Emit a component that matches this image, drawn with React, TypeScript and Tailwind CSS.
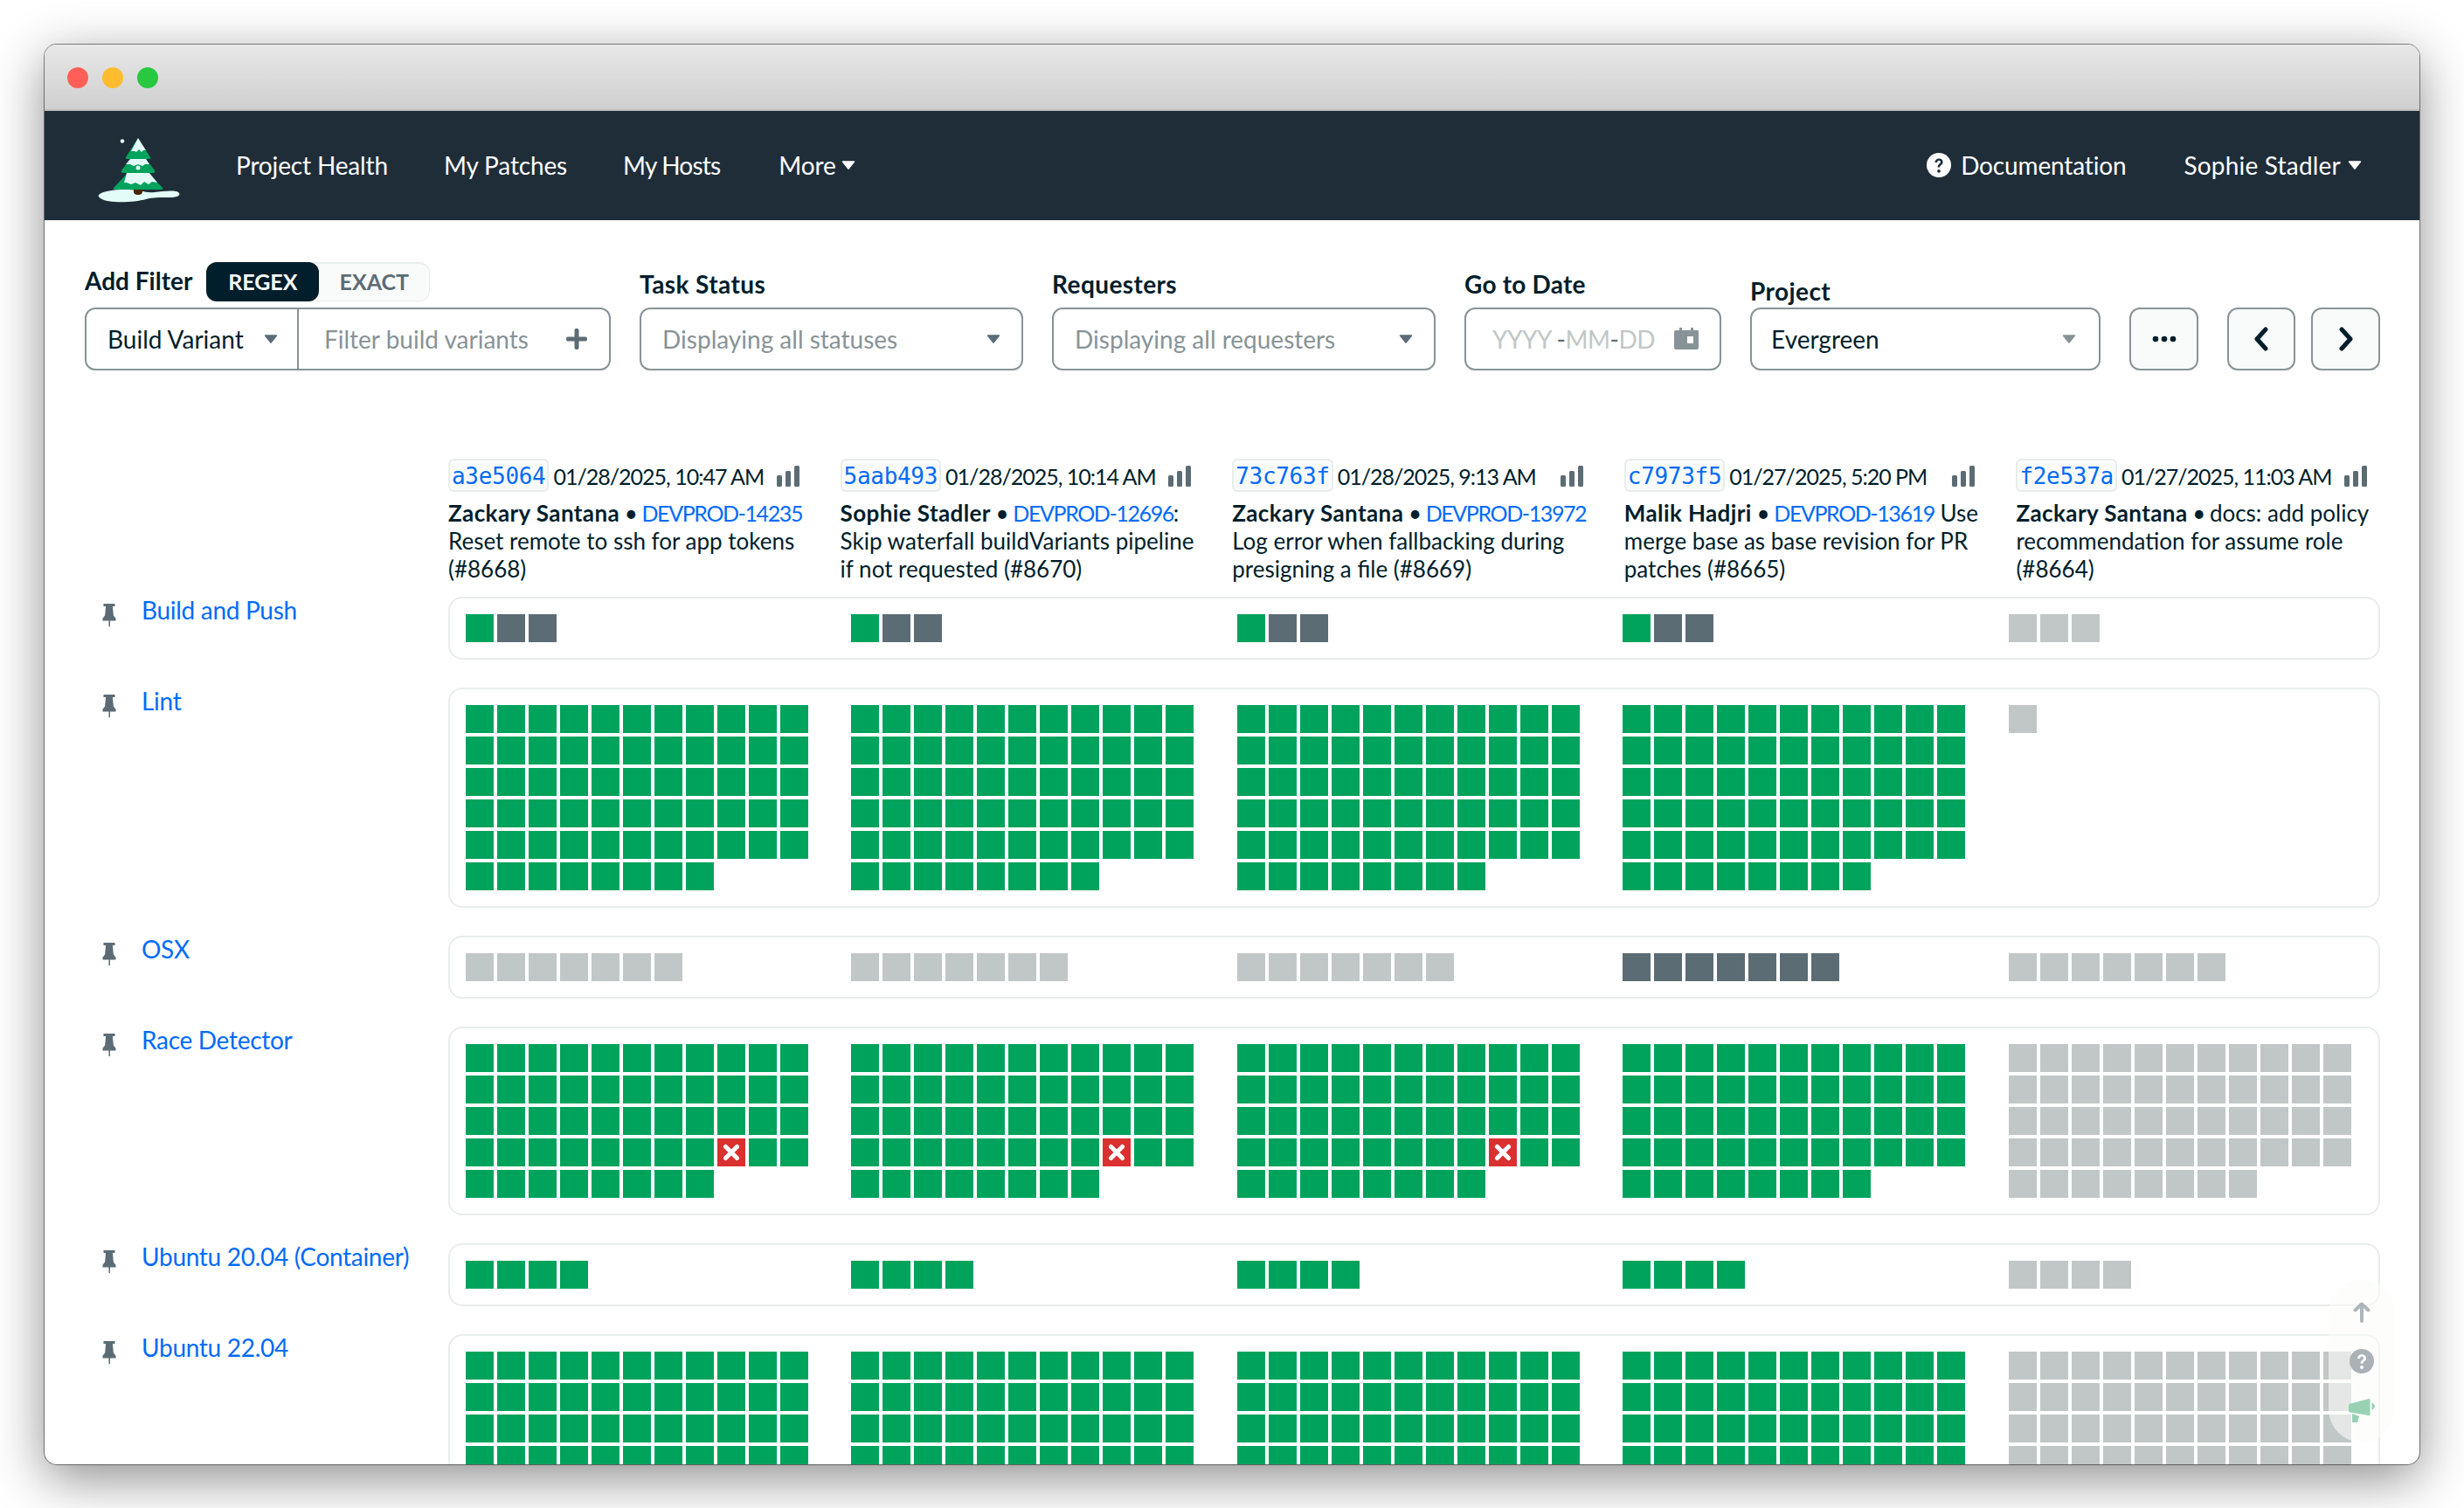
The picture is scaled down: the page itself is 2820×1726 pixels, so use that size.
import React from "react";

const G = "bg-[#00a35c]";
const D = "bg-[#5c6c75]";
const L = "bg-[#c1c7c6]";

function rep(c: string, n: number) {
  return Array.from({ length: n }, () => c);
}

const commits = [
  { hash: "a3e5064", date: "01/28/2025, 10:47 AM", author: "Zackary Santana", link: "DEVPROD-14235", after: "", lines: ["Reset remote to ssh for app tokens", "(#8668)"] },
  { hash: "5aab493", date: "01/28/2025, 10:14 AM", author: "Sophie Stadler", link: "DEVPROD-12696", after: ":", lines: ["Skip waterfall buildVariants pipeline", "if not requested (#8670)"] },
  { hash: "73c763f", date: "01/28/2025, 9:13 AM", author: "Zackary Santana", link: "DEVPROD-13972", after: "", lines: ["Log error when fallbacking during", "presigning a file (#8669)"] },
  { hash: "c7973f5", date: "01/27/2025, 5:20 PM", author: "Malik Hadjri", link: "DEVPROD-13619", after: " Use", lines: ["merge base as base revision for PR", "patches (#8665)"] },
  { hash: "f2e537a", date: "01/27/2025, 11:03 AM", author: "Zackary Santana", link: "", after: "docs: add policy", lines: ["recommendation for assume role", "(#8664)"] },
];

const racePass = (c: string) => rep(c, 52);
const raceFail = () => {
  const a = rep(G, 52);
  a[41] = "X";
  return a;
};

const rows: { name: string; cols: string[][] }[] = [
  { name: "Build and Push", cols: [[G, D, D], [G, D, D], [G, D, D], [G, D, D], [L, L, L]] },
  { name: "Lint", cols: [rep(G, 63), rep(G, 63), rep(G, 63), rep(G, 63), [L]] },
  { name: "OSX", cols: [rep(L, 7), rep(L, 7), rep(L, 7), rep(D, 7), rep(L, 7)] },
  { name: "Race Detector", cols: [raceFail(), raceFail(), raceFail(), racePass(G), racePass(L)] },
  { name: "Ubuntu 20.04 (Container)", cols: [rep(G, 4), rep(G, 4), rep(G, 4), rep(G, 4), rep(L, 4)] },
  { name: "Ubuntu 22.04", cols: [rep(G, 52), rep(G, 52), rep(G, 52), rep(G, 52), rep(L, 52)] },
];

function Caret({ className }: { className: string }) {
  return (
    <svg viewBox="0 0 16 12" className={className} fill="currentColor">
      <path d="M1.5 1.2h13a.8.8 0 0 1 .6 1.3L8.7 10.6a.9.9 0 0 1-1.4 0L.9 2.5a.8.8 0 0 1 .6-1.3z" />
    </svg>
  );
}

function Logo() {
  return (
    <svg viewBox="0 0 150 110" className="w-[150px] h-[110px] shrink-0">
      <circle cx="51" cy="27.5" r="2.3" fill="#e3fcf7" />
      <path d="M24 89c6-6 30-7 46-5 6 1 10 3 18 2 10-1 25-3 28 1 2 3-3 5-12 5-12 0-18 0-26 2-14 4-44 5-52-1-2-1-3-3-2-4z" fill="#e3fcf7" />
      <path d="M64 80h10v5c0 3-2 4-5 4s-5-1-5-4z" fill="#4a2308" />
      <path d="M69 24 83 46c1 1 0 2-2 2H57c-2 0-3-1-2-2z" fill="#00a35c" />
      <path d="M69 24 78 38l-3 0-2 2-3-3-3 3-2-1-4 0z" fill="#e3fcf7" />
      <path d="M61 47h16l11 14c1 2 0 3-2 3H52c-2 0-3-1-2-3z" fill="#00a35c" />
      <path d="M60 48h18l4 6-5 0-3 2-5-2-5 2-4-2-5 0z" fill="#e3fcf7" />
      <path d="M57 64h24l16 17c1 1 0 2-2 2H43c-2 0-3-1-2-2z" fill="#00a35c" />
      <path d="M56 64h26l9 11-6-1-4 3-5-3-4 4-6-3-5 2-5-2-3 0z" fill="#e3fcf7" />
      <circle cx="69" cy="58" r="2.5" fill="#e3fcf7" />
    </svg>
  );
}

function Pin() {
  return (
    <svg viewBox="0 0 16 26" className="w-4 h-[26px] shrink-0 text-[#5c6c75]" fill="currentColor">
      <path d="M1.5 0h13v3h-2.6l1 10.5 2.6 3.2v2.8H9v6.5H7.5v-6.5H.5v-2.8l2.6-3.2 1-10.5H1.5z" />
    </svg>
  );
}

function Bars() {
  return (
    <svg viewBox="0 0 26 24" className="w-[26px] h-6 shrink-0" fill="#5c6c75">
      <rect x="0" y="11" width="6" height="13" rx="1.5" />
      <rect x="10" y="6" width="6" height="18" rx="1.5" />
      <rect x="20" y="0" width="6" height="24" rx="1.5" />
    </svg>
  );
}

function Select({ w, text, ph }: { w: string; text: string; ph?: boolean }) {
  return (
    <div className={`${w} h-[72px] border-2 border-[#889397] rounded-xl bg-white flex items-center justify-between pl-6 pr-[24px]`}>
      <span className={`text-[28px] ${ph ? "text-[#889397]" : "text-[#001e2b]"}`}>{text}</span>
      <Caret className="w-4 h-3 text-[#5c6c75]" />
    </div>
  );
}

function Squares({ cells }: { cells: string[] }) {
  return (
    <div className="flex flex-wrap gap-1 content-start min-w-0">
      {cells.map((c, i) =>
        c === "X" ? (
          <div key={i} className="w-8 h-8 bg-[#db3030] flex items-center justify-center">
            <svg viewBox="0 0 20 20" className="w-5 h-5" fill="none" stroke="#fff" strokeWidth="5" strokeLinecap="round">
              <path d="M3.5 3.5l13 13M16.5 3.5l-13 13" />
            </svg>
          </div>
        ) : (
          <div key={i} className={`w-8 h-8 ${c}`} />
        )
      )}
    </div>
  );
}

export default function App() {
  return (
    <div className="w-[2820px] h-[1726px] bg-white overflow-hidden p-[51px] pb-0 font-['Lato',sans-serif] text-[#001e2b]">
      <div className="relative w-[2718px] h-[1625px] rounded-[14px] overflow-hidden bg-white shadow-[0_16px_60px_rgba(0,0,0,0.45),0_0_0_1px_rgba(0,0,0,0.45)]">
        <div className="h-[76px] flex items-center gap-4 pl-[26px] pt-[2px] bg-gradient-to-b from-[#e8e8e8] to-[#cfcfcf] border-b-2 border-[#bdbdbd]">
          <div className="w-6 h-6 rounded-full bg-[#ff5f57]" />
          <div className="w-6 h-6 rounded-full bg-[#febc2e]" />
          <div className="w-6 h-6 rounded-full bg-[#28c840]" />
        </div>

        <nav className="h-[125px] bg-[#1f2d39] flex items-center pl-[38px] pr-[66px] pb-[2px] text-white text-[28px] tracking-[-0.15px]">
          <Logo />
          <div className="ml-[31px] flex items-center gap-[64px]">
            <span>Project Health</span>
            <span>My Patches</span>
            <span className="tracking-[-0.8px]">My Hosts</span>
            <span className="flex items-center gap-[6px] ml-[3px]">
              More
              <Caret className="w-4 h-3" />
            </span>
          </div>
          <div className="ml-auto flex items-center">
            <svg viewBox="0 0 28 28" className="w-7 h-7 mr-[11px]">
              <circle cx="14" cy="14" r="14" fill="#fff" />
              <path d="M9.5 11c0-3 2-4.6 4.6-4.6s4.5 1.6 4.5 4c0 3.4-3.4 3.200-3.4 6h-2.600c0-4 3.300-3.800 3.300-6 0-1-.8-1.700-1.900-1.700s-1.900.8-1.900 2.300z" fill="#1f2d39" />
              <circle cx="14" cy="20.8" r="1.9" fill="#1f2d39" />
            </svg>
            <span>Documentation</span>
            <span className="ml-[66px] flex items-center gap-[8px] tracking-[0.2px]">
              Sophie Stadler
              <Caret className="w-4 h-3" />
            </span>
          </div>
        </nav>

        <div className="pl-[46px] pr-[45px]">
          <div className="flex items-end gap-[33px] pt-[48px]">
            <div className="w-[603px]">
              <div className="flex items-center gap-4 h-[45px] mb-[7px]">
                <span className="text-[28px] font-bold -mt-[4px]">Add Filter</span>
                <div className="flex w-[256px] h-[45px] rounded-xl bg-[#f9fbfa] border border-[#e8edeb] border-t-2">
                  <div className="w-[129px] -ml-px -mt-0.5 h-[45px] rounded-xl bg-[#001e2b] text-white text-[25px] font-bold flex items-center justify-center">REGEX</div>
                  <div className="flex-1 text-[#5c6c75] text-[25px] font-bold flex items-center justify-center">EXACT</div>
                </div>
              </div>
              <div className="h-[72px] border-2 border-[#889397] rounded-xl flex items-center">
                <div className="w-[243px] h-full border-r-2 border-[#889397] flex items-center justify-between pl-6 pr-[22px]">
                  <span className="text-[28px]">Build Variant</span>
                  <Caret className="w-4 h-3 text-[#5c6c75]" />
                </div>
                <div className="flex-1 flex items-center justify-between pl-[29px] pr-[25px]">
                  <span className="text-[28px] text-[#889397]">Filter build variants</span>
                  <svg viewBox="0 0 24 24" className="w-6 h-6" fill="#5c6c75">
                    <path d="M9.5 1.5a2 2 0 0 1 2-1.500h1a2 2 0 0 1 2 1.500v8h7.500a2 2 0 0 1 2 2v1a2 2 0 0 1-2 2h-7.500v7.500a2 2 0 0 1-2 2h-1a2 2 0 0 1-2-2v-7.500h-7.500a2 2 0 0 1-2-2v-1a2 2 0 0 1 2-2h7.500z" />
                  </svg>
                </div>
              </div>
            </div>
            <div>
              <div className="text-[28px] leading-8 tracking-[0.4px] font-bold mb-[11px]">Task Status</div>
              <Select w="w-[439px]" text="Displaying all statuses" ph />
            </div>
            <div>
              <div className="text-[28px] leading-8 tracking-[0.4px] font-bold mb-[11px]">Requesters</div>
              <Select w="w-[439px]" text="Displaying all requesters" ph />
            </div>
            <div>
              <div className="text-[28px] leading-8 tracking-[0.2px] font-bold mb-[11px]">Go to Date</div>
              <div className="w-[294px] h-[72px] border-2 border-[#889397] rounded-xl flex items-center justify-between pl-[30px] pr-[24px]">
                <span className="text-[28px] tracking-[-0.5px] text-[#c1c7c6]">
                  YYYY <span className="text-[#5c6c75]">-</span>MM<span className="text-[#5c6c75]">-</span>DD
                </span>
                <svg viewBox="0 0 28 28" className="w-7 h-7 -mt-[2px]" fill="#889397">
                  <path d="M2 5h4V2h3v3h10V2h3v3h4a2 2 0 0 1 2 1v19a2 2 0 0 1-2 2H2a2 2 0 0 1-2-2V7a2 2 0 0 1 2-2z" />
                  <rect x="15" y="12" width="7" height="8" fill="#fff" />
                </svg>
              </div>
            </div>
            <div>
              <div className="text-[28px] leading-8 tracking-[0.4px] font-bold mb-[3px]">Project</div>
              <div className="w-[401px] h-[72px] border-2 border-[#889397] rounded-xl flex items-center justify-between pl-[22px] pr-[26px]">
                <span className="text-[28px]">Evergreen</span>
                <Caret className="w-4 h-3 text-[#889397]" />
              </div>
            </div>
            <div className="w-[79px] h-[72px] border-2 border-[#889397] rounded-xl bg-[#f9fbfa] flex items-center justify-center">
              <svg viewBox="0 0 28 8" className="w-7 h-2" fill="#001e2b">
                <circle cx="4" cy="4" r="3.300" />
                <circle cx="14" cy="4" r="3.300" />
                <circle cx="24" cy="4" r="3.300" />
              </svg>
            </div>
            <div className="flex gap-[18px]">
              <div className="w-[78px] h-[72px] border-2 border-[#889397] rounded-xl bg-[#f9fbfa] flex items-center justify-center">
                <svg viewBox="0 0 20 28" className="w-5 h-7" fill="none" stroke="#001e2b" strokeWidth="5" strokeLinecap="round" strokeLinejoin="round">
                  <path d="M15 3 5 14l10 11" />
                </svg>
              </div>
              <div className="w-[79px] h-[72px] border-2 border-[#889397] rounded-xl bg-[#f9fbfa] flex items-center justify-center">
                <svg viewBox="0 0 20 28" className="w-5 h-7" fill="none" stroke="#001e2b" strokeWidth="5" strokeLinecap="round" strokeLinejoin="round">
                  <path d="M5 3l10 11L5 25" />
                </svg>
              </div>
            </div>
          </div>

          <div className="flex mt-[101px] mb-[16px]">
            <div className="w-[416px] shrink-0" />
            <div className="grid grid-cols-5 gap-8 flex-1">
              {commits.map((c) => (
                <div key={c.hash} className="text-[26px] leading-[32px] whitespace-nowrap">
                  <div className="flex items-center h-[39px] mb-[7px]">
                    <span className="self-start h-[38px] px-[2px] border-2 border-[#e8edeb] rounded-md bg-[#f9fbfa] text-[#016bf8] font-['DejaVu_Sans_Mono',monospace] text-[26px] tracking-[-0.3px] leading-[36px]">{c.hash}</span>
                    <span className="ml-[5px] text-[25px] tracking-[-1px]">{c.date}</span>
                    <span className="ml-auto mr-[15px]"><Bars /></span>
                  </div>
                  <div>
                    <span className="font-bold tracking-[0.4px]">{c.author}</span>
                    <span className="tracking-[-1px]"> • </span>
                    {c.link && <span className="text-[#016bf8] text-[25px] tracking-[-1.4px]">{c.link}</span>}
                    {c.after}
                  </div>
                  {c.lines.map((l) => (
                    <div key={l}>{l}</div>
                  ))}
                </div>
              ))}
            </div>
          </div>

          {rows.map((r) => (
            <div key={r.name} className="flex mb-8">
              <div className="w-[416px] shrink-0 flex items-start pl-5 pt-[8px]">
                <Pin />
                <span className="ml-[29px] -mt-[6px] text-[28px] leading-[26px] tracking-[-0.3px] text-[#016bf8] whitespace-nowrap">{r.name}</span>
              </div>
              <div className="flex-1 border-2 border-[#e8edeb] rounded-2xl pl-[18px] pr-[14px] py-[18px] grid grid-cols-5 gap-8">
                {r.cols.map((cells, i) => (
                  <Squares key={i} cells={cells} />
                ))}
              </div>
            </div>
          ))}
        </div>

        <div className="absolute right-[28px] bottom-[25px] w-[76px] h-[187px] rounded-[38px] bg-[#fbfcfa]/60 flex flex-col items-center pt-[26px]">
          <svg viewBox="0 0 20 24" className="w-5 h-6" fill="none" stroke="#aeb6bb" strokeWidth="4" strokeLinecap="round" strokeLinejoin="round">
            <path d="M10 22V3M2.500 9.500 10 2.500l7.500 7" />
          </svg>
          <svg viewBox="0 0 28 28" className="w-7 h-7 mt-[30px]">
            <circle cx="14" cy="14" r="14" fill="#aab2b8" />
            <path d="M9 11c0-3 2.200-4.800 5-4.800s5 1.700 5 4.200c0 3.500-3.600 3.300-3.600 6.300h-2.800c0-4.200 3.500-4 3.500-6.300 0-1-.9-1.800-2.100-1.800s-2.100.9-2.100 2.400z" fill="#fff" />
            <circle cx="14" cy="21" r="2" fill="#fff" />
          </svg>
          <svg viewBox="0 0 30 28" className="w-[30px] h-7 mt-[28px]" fill="#99d2b3">
            <path d="M2 6.500 23 1c1-.200 1.500.3 1.500 1v17c0 1-.6 1.400-1.500 1.100L2 16.500c-1-.3-2-1-2-2.500V9c0-1.300 1-2.200 2-2.500z" />
            <path d="M26.500 5.500c2 .7 3.500 2.200 3.500 4s-1.500 3.500-3.500 4z" />
            <path d="M4 18l8 3-1.500 6c-.2.700-.8 1-1.500 1H4z" />
          </svg>
        </div>
      </div>
    </div>
  );
}
